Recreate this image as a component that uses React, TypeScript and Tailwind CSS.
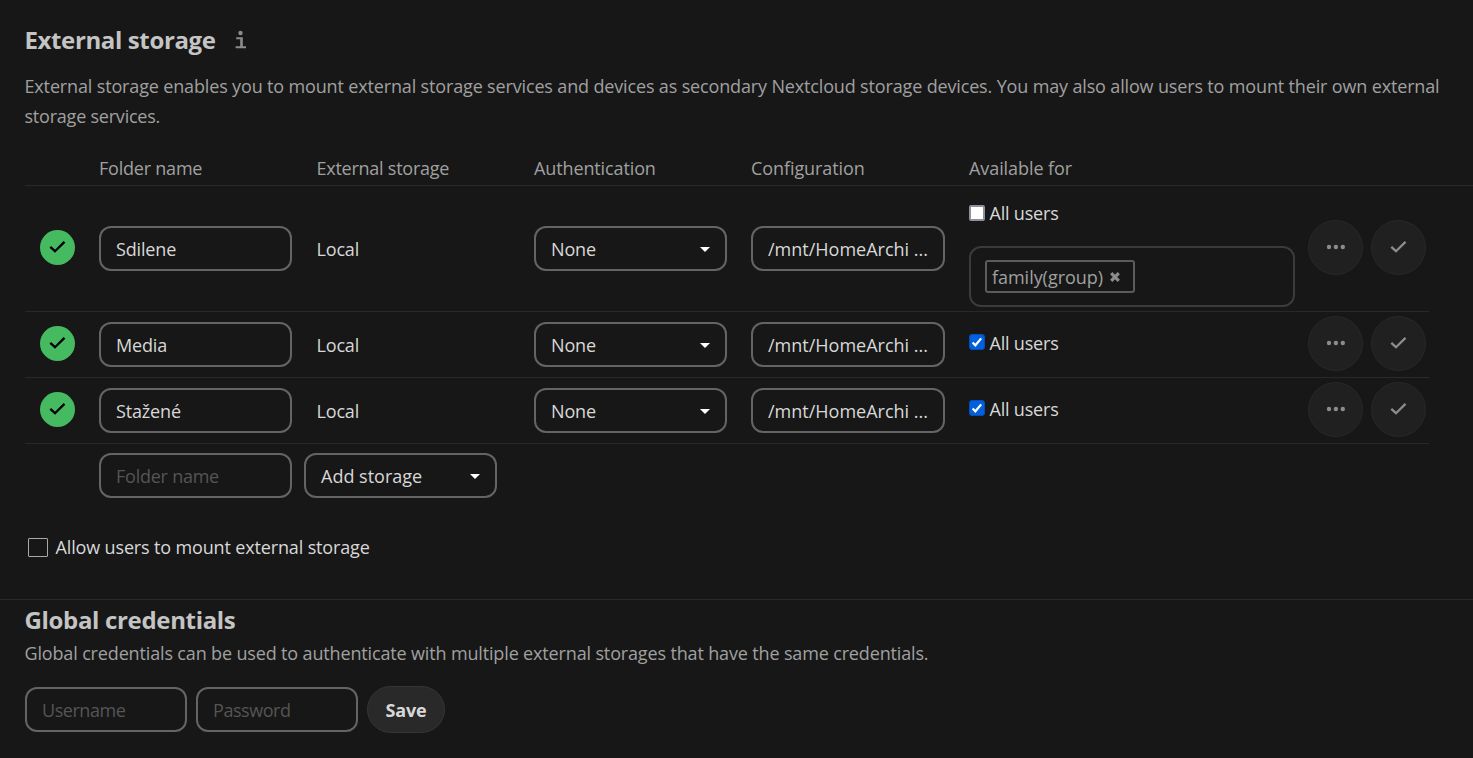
import type { ReactNode } from "react";

const GRID = "grid grid-cols-[74px_217.5px_217.5px_217px_218px_339px_auto]";
const FIELD =
  "flex h-[45px] items-center rounded-[12px] border-2 border-[#646464] pl-[15px] pr-[15px] pt-px";

function CheckIcon({ className }: { className: string }) {
  return (
    <svg viewBox="0 0 20 16" className={className} fill="none" stroke="currentColor" strokeWidth="2.3">
      <path d="M2.3 7.8 7 12.2 16.5 2.9" />
    </svg>
  );
}

function Caret() {
  return (
    <svg viewBox="0 0 10 5" className="h-[5px] w-[10px] shrink-0 text-white" fill="currentColor">
      <path d="M0 0h10L5 5z" />
    </svg>
  );
}

function Field({ children }: { children: ReactNode }) {
  return <div className={`${FIELD} w-[193px]`}>{children}</div>;
}

function Select({ children }: { children: ReactNode }) {
  return (
    <div className={`${FIELD} w-[193px] justify-between`}>
      <span>{children}</span>
      <Caret />
    </div>
  );
}

function RoundButton({ children }: { children: ReactNode }) {
  return (
    <button className="flex size-[55px] items-center justify-center rounded-full border border-[#282828] bg-[#202020] text-[#8c8c8c]">
      {children}
    </button>
  );
}

function AllUsers({ checked }: { checked: boolean }) {
  return (
    <label className="flex h-[30px] items-center">
      {checked ? (
        <span className="-mt-px flex size-4 items-center justify-center rounded-[3px] border border-[#0a4db0] bg-[#0060df]">
          <svg viewBox="0 0 14 14" className="size-[14px] shrink-0" fill="none" stroke="white" strokeWidth="2.2">
            <path d="M2.6 7.4 5.4 10.3 11.2 3.4" />
          </svg>
        </span>
      ) : (
        <span className="-mt-px size-4 rounded-[2px] border-2 border-[#8f8f9d] bg-white" />
      )}
      <span className="ml-[4.5px] tracking-[-0.2px]">All users</span>
    </label>
  );
}

function StorageRow({ name, group, tall }: { name: string; group?: string; tall?: boolean }) {
  return (
    <div
      className={`${GRID} ml-[25px] w-[1404px] items-center border-b border-[#292929] ${tall ? "h-[126px]" : "h-[66px]"}`}
    >
      <div className="-mt-[3px] ml-[15px] flex size-[35px] items-center justify-center rounded-full bg-[#46ba61] text-black">
        <CheckIcon className="-mt-px h-4 w-5" />
      </div>
      <Field>{name}</Field>
      <span>Local</span>
      <Select>None</Select>
      <div className={`${FIELD} w-[194px] tracking-normal`}>/mnt/HomeArchi ...</div>
      {group ? (
        <div className="w-[326px] pt-2">
          <AllUsers checked={false} />
          <div className="mt-[18px] flex h-[61px] items-center rounded-[12px] border-2 border-[#3b3b3b] pl-[14px]">
            <div className="flex h-[33px] w-[150px] items-center rounded-[3px] border-2 border-[#5c5c5c] pl-[5px] text-[#a0a0a0]">
              <span className="tracking-[-0.035px]">{group}</span>
              <svg viewBox="0 0 10 10" className="ml-[7px] size-[10px]" fill="none" stroke="#8c8c8c" strokeWidth="3.2">
                <path d="M1.2 1.2 8.8 8.8M8.8 1.2 1.2 8.8" />
              </svg>
            </div>
          </div>
        </div>
      ) : (
        <div className="-mt-1">
          <AllUsers checked />
        </div>
      )}
      <div className="-mt-0.5 flex gap-2">
        <RoundButton>
          <svg viewBox="0 0 20 6" className="-mt-px h-[6px] w-5" fill="currentColor">
            <circle cx="3" cy="3" r="2.2" />
            <circle cx="9.9" cy="3" r="2.2" />
            <circle cx="16.8" cy="3" r="2.2" />
          </svg>
        </RoundButton>
        <RoundButton>
          <CheckIcon className="-mt-0.5 h-4 w-5" />
        </RoundButton>
      </div>
    </div>
  );
}

export default function App() {
  return (
    <div className="h-[758px] w-[1473px] overflow-hidden bg-[#171717] font-['Open_Sans','Noto_Sans',sans-serif] text-[18px] leading-[30px] tracking-[-0.157px] text-[#d8d8d8]">
      <header className="flex items-center pl-[24.5px] pt-[25px]">
        <h2 className="text-[24px] font-bold tracking-[-0.37px] text-[#c4c4c4]">External storage</h2>
        <svg viewBox="0 0 12 20" className="-mt-px ml-[19.5px] h-5 w-3" fill="#8c8c8c">
          <circle cx="5.5" cy="3" r="2.2" />
          <path d="M1.2 7.2h6.6v9h3.2v2.1H.6v-2.1h4.6V9.2h-4z" />
        </svg>
      </header>
      <p className="ml-[24.5px] mt-4 w-[1424px] whitespace-nowrap tracking-[-0.151px] text-[#a0a0a0]">
        External storage enables you to mount external storage services and devices as secondary Nextcloud storage
        devices. You may also allow users to mount their own external
        <br />
        <span className="tracking-[-0.22px]">storage services.</span>
      </p>

      <div className={`${GRID} ml-[25px] mt-[22px] h-[33px] border-b border-[#292929] text-[#a0a0a0]`}>
        <span />
        <span className="tracking-[-0.22px]">Folder name</span>
        <span className="tracking-[-0.25px]">External storage</span>
        <span className="tracking-[-0.12px]">Authentication</span>
        <span className="tracking-[-0.08px]">Configuration</span>
        <span className="tracking-[-0.08px]">Available for</span>
      </div>
      <StorageRow name="Sdilene" group="family(group)" tall />
      <StorageRow name="Media" />
      <StorageRow name="Stažené" />
      <div className="ml-[99px] mt-[9px] flex gap-3">
        <div className={`${FIELD} w-[193px] tracking-[-0.24px] text-[#555555]`}>Folder name</div>
        <div className={`${FIELD} w-[193px] justify-between tracking-normal`}>
          <span>Add storage</span>
          <Caret />
        </div>
      </div>
      <label className="ml-7 mt-[34px] flex h-[30px] items-center">
        <span className="h-[19px] w-5 rounded-[1px] border border-[#a8a8a8]" />
        <span className="ml-[7.5px] tracking-[-0.145px]">Allow users to mount external storage</span>
      </label>

      <section className="mt-[37px] border-t border-[#292929] pl-[24.5px] pt-[5px]">
        <h2 className="text-[24px] font-bold tracking-[-0.33px] text-[#c4c4c4]">Global credentials</h2>
        <p className="mt-[3px] tracking-[-0.15px] text-[#a0a0a0]">
          Global credentials can be used to authenticate with multiple external storages that have the same credentials.
        </p>
        <div className="ml-[0.5px] mt-[18px] flex items-center gap-[9px] text-[#555555]">
          <div className={`${FIELD} w-[162px] tracking-[-0.45px]`}>Username</div>
          <div className={`${FIELD} w-[162px] tracking-[-0.45px]`}>Password</div>
          <button className="h-[47px] w-[78px] rounded-full border border-[#353535] bg-[#292929] font-bold text-[#d8d8d8]">
            Save
          </button>
        </div>
      </section>
    </div>
  );
}
